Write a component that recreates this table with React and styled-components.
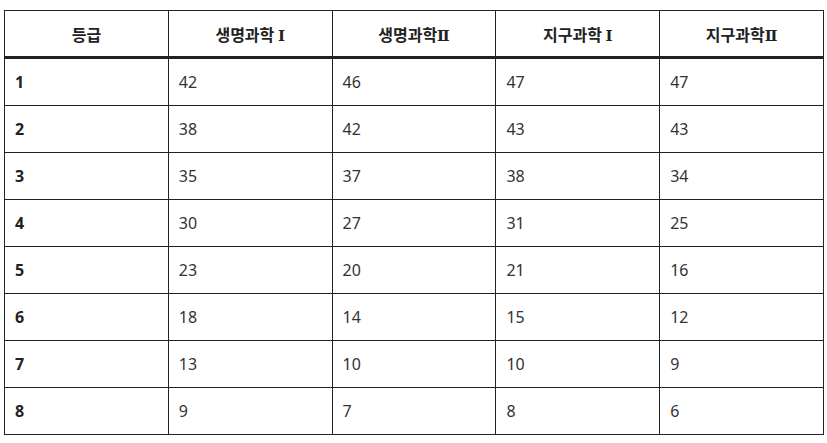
import React from 'react'
import styled, { createGlobalStyle } from 'styled-components'

const GlobalStyle = createGlobalStyle`
  body {
    margin: 0;
    background: #FFFFFF;
    font-family: "Noto Sans", "Noto Sans CJK KR", sans-serif;
  }
`

const Wrapper = styled.div`
  padding: 10px 3px 0 4px;
`

const Table = styled.table`
  width: 820px;
  border-collapse: collapse;
  table-layout: fixed;
  font-size: 16px;
  color: #333333;
`

const HeadCell = styled.th`
  height: 45px;
  padding: 0 10px;
  border: 1px solid #222222;
  border-bottom: 3px solid #222222;
  font-family: "Noto Sans CJK KR", sans-serif;
  font-weight: 700;
  color: #222222;
  text-align: center;
`

const Numeral = styled.span`
  font-family: "DejaVu Serif", "Noto Sans CJK KR", serif;
  font-size: 15px;
  font-weight: 700;
`

const Cell = styled.td`
  height: 46px;
  padding: 0 10px;
  border: 1px solid #222222;
  font-weight: ${(p) => (p.$bold ? 700 : 400)};
  color: ${(p) => (p.$bold ? '#222222' : '#333333')};
`

const headers = [
  ['등급', ''],
  ['생명과학 ', 'Ⅰ'],
  ['생명과학', 'Ⅱ'],
  ['지구과학 ', 'Ⅰ'],
  ['지구과학', 'Ⅱ'],
]

const rows = [
  [1, 42, 46, 47, 47],
  [2, 38, 42, 43, 43],
  [3, 35, 37, 38, 34],
  [4, 30, 27, 31, 25],
  [5, 23, 20, 21, 16],
  [6, 18, 14, 15, 12],
  [7, 13, 10, 10, 9],
  [8, 9, 7, 8, 6],
]

const App = () => {
  return (
    <Wrapper>
      <GlobalStyle />
      <Table>
        <thead>
          <tr>
            {headers.map(([name, num]) => (
              <HeadCell key={name + num}>
                {name}
                {num && <Numeral>{num}</Numeral>}
              </HeadCell>
            ))}
          </tr>
        </thead>
        <tbody>
          {rows.map((row) => (
            <tr key={row[0]}>
              {row.map((v, i) => (
                <Cell key={i} $bold={i === 0}>{v}</Cell>
              ))}
            </tr>
          ))}
        </tbody>
      </Table>
    </Wrapper>
  )
}

export default App
